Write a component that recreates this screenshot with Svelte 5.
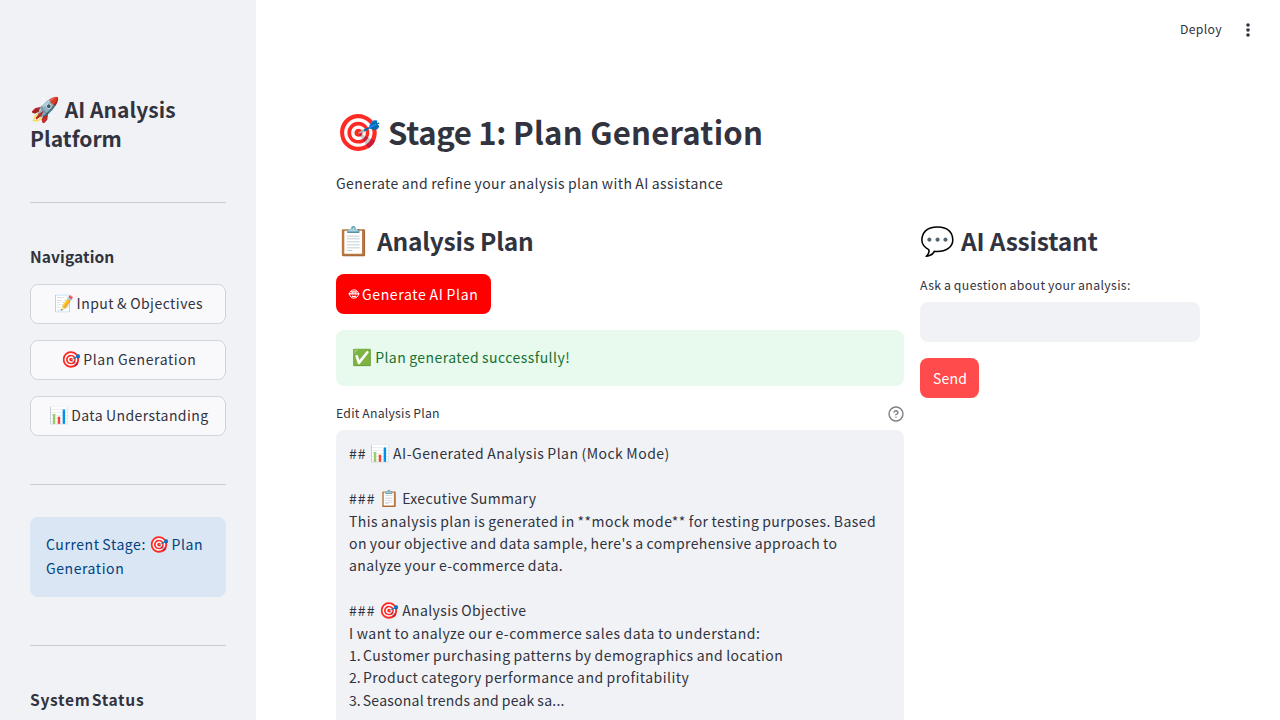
<script lang="ts">
  const nav = [
    { icon: '📝', label: 'Input & Objectives', ls: 0.46 },
    { icon: '🎯', label: 'Plan Generation', ls: 0.57 },
    { icon: '📊', label: 'Data Understanding', ls: 0.42 },
  ];

  const plan = [
    { pre: '## ', preLs: 1, icon: '📊', text: ' AI-Generated Analysis Plan (Mock Mode)', ls: 0.48 },
    { text: '', ls: 0 },
    { pre: '### ', preLs: 1.1, icon: '📋', text: ' Executive Summary', ls: 0.35 },
    { text: 'This analysis plan is generated in **mock mode** for testing purposes. Based', ls: 0.45 },
    { text: "on your objective and data sample, here's a comprehensive approach to", ls: 0.395 },
    { text: 'analyze your e-commerce data.', ls: 0.44 },
    { text: '', ls: 0 },
    { pre: '### ', preLs: 1.1, icon: '🎯', text: ' Analysis Objective', ls: 0.38 },
    { text: 'I want to analyze our e-commerce sales data to understand:', ls: 0.52 },
    { num: '1.', text: ' Customer purchasing patterns by demographics and location', ls: 0.47 },
    { num: '2.', text: ' Product category performance and profitability', ls: 0.47 },
    { num: '3.', text: ' Seasonal trends and peak sa...', ls: 0.25 },
  ];
</script>

<div class="app">
  <aside>
    <h2 class="brand"><span class="emoji">🚀</span> AI Analysis<br />Platform</h2>
    <hr />
    <h3>Navigation</h3>
    <nav>
      {#each nav as item}
        <button class="nav-btn"><span class="emoji">{item.icon}</span>&nbsp;<span style:letter-spacing="{item.ls}px">{item.label}</span></button>
      {/each}
    </nav>
    <hr class="after-nav" />
    <div class="info">Current Stage: <span class="emoji">🎯</span> Plan<br />Generation</div>
    <hr class="after-info" />
    <h3 class="status">System Status</h3>
  </aside>

  <div class="page">
    <header>
      <span class="deploy">Deploy</span>
      <svg class="dots" width="16" height="16" viewBox="0 0 16 16" fill="#31333f">
        <circle cx="8" cy="3" r="1.8" /><circle cx="8" cy="8" r="1.8" /><circle cx="8" cy="13" r="1.8" />
      </svg>
    </header>
    <main>
      <h1><span class="emoji">🎯</span> <span class="stage">Stage 1:</span> <span class="title">Plan Generation</span></h1>
      <p class="lead">Generate and refine your analysis plan with AI assistance</p>
      <div class="columns">
        <section class="left">
          <h2><span class="emoji">📋</span> Analysis Plan</h2>
          <button class="generate">
            <svg width="12" height="12" viewBox="0 0 12 12" fill="none" stroke="#fff">
              <ellipse cx="6" cy="6" rx="4.5" ry="4.1" stroke-width="1" />
              <path d="M3.2 3.9h5.6M.6 5.9h10.8M3.8 8q2.2 1.1 4.4 0" stroke-width="1.1" />
              <circle cx="4.4" cy="5" r=".5" stroke-width=".8" /><circle cx="7.6" cy="5" r=".5" stroke-width=".8" />
            </svg><span>Generate AI Plan</span>
          </button>
          <div class="success"><span class="emoji">✅</span>&nbsp;<span class="message">Plan generated successfully!</span></div>
          <div class="label">
            <span>Edit Analysis Plan</span>
            <svg width="16" height="16" viewBox="0 0 24 24" fill="none" stroke="#808189" stroke-width="2.2" stroke-linecap="round" stroke-linejoin="round">
              <circle cx="12" cy="12" r="10.4" />
              <path d="M9.1 9a3 3 0 0 1 5.8 1c0 2-3 3-3 3M12 17h.01" />
            </svg>
          </div>
          <div class="editor">
            {#each plan as line}
              <div class="line" style:letter-spacing="{line.ls}px">{#if line.icon}<span style:letter-spacing="{line.preLs}px">{line.pre}</span><span class="emoji">{line.icon}</span>{/if}{#if line.num}<span class="num">{line.num}</span>{/if}{line.text}</div>
            {/each}
          </div>
        </section>
        <section class="right">
          <h2><span class="emoji">💬</span> AI Assistant</h2>
          <label class="ask" for="question">Ask a question about your analysis:</label>
          <input id="question" />
          <button class="send">Send</button>
        </section>
      </div>
    </main>
  </div>
</div>

<style>
  :global(body) { margin: 0; overflow: hidden; background: #fff; }
  * { box-sizing: border-box; }
  .app {
    display: flex;
    width: 1280px;
    height: 720px;
    overflow: hidden;
    color: #31333f;
    font-family: 'Noto Sans CJK SC', 'Noto Sans', sans-serif;
    font-size: 14px;
  }
  button, input { font: inherit; color: inherit; border: 0; padding: 0; }
  h1, h2, h3, p { margin: 0; font-weight: 600; white-space: nowrap; }
  .emoji { font-size: 1.143em; line-height: 0; letter-spacing: 0; }
  aside { width: 256px; flex: none; height: 720px; padding: 95px 30px 0; background: #f0f2f6; overflow: hidden; }
  .brand { font-size: 21px; line-height: 28.8px; letter-spacing: 0.04px; }
  hr { margin: 48px 0 0; border: 0; height: 1px; background: #cbccd2; }
  .brand + hr { margin-top: 49px; }
  h3 { font-size: 15.6px; line-height: 24px; letter-spacing: 0.08px; }
  aside > h3 { margin-top: 41px; }
  .status { letter-spacing: 0.68px; word-spacing: -3px; }
  nav { display: flex; flex-direction: column; gap: 16px; margin-top: 16px; }
  .nav-btn {
    height: 40px;
    padding: 0 0 2px 1px;
    border: 1px solid #d0d2d8;
    border-radius: 8px;
    background: #f9f9fb;
    line-height: 24px;
    white-space: nowrap;
    word-spacing: -0.5px;
  }
  .info {
    margin-top: 32px;
    height: 80px;
    padding: 15px 16px;
    border-radius: 8px;
    background: #dae6f4;
    color: #004280;
    line-height: 24px;
    white-space: nowrap;
    letter-spacing: 0.57px;
    word-spacing: -0.9px;
  }
  .page { flex: 1; min-width: 0; }
  header { height: 60px; display: flex; align-items: center; justify-content: flex-end; padding-right: 24px; gap: 18px; }
  .deploy { font-size: 12.25px; line-height: 20px; letter-spacing: 0.33px; padding-bottom: 2px; }
  main { padding: 45px 80px 0; }
  h1 { font-size: 31.1px; line-height: 53px; }
  h1 .emoji { font-size: 36px; }
  .stage { letter-spacing: -0.35px; }
  .title { letter-spacing: 0.24px; }
  .lead { font-weight: 400; font-size: 14px; line-height: 24px; margin-top: 13px; letter-spacing: 0.44px; word-spacing: -0.6px; }
  .columns { display: flex; gap: 16px; margin-top: 28px; }
  .left { width: 568px; }
  .right { width: 280px; }
  section h2 { font-size: 24.5px; line-height: 36px; letter-spacing: -0.2px; }
  section h2 .emoji { margin-right: 0.6px; }
  .generate {
    display: flex;
    align-items: center;
    gap: 2px;
    width: 155px;
    height: 40px;
    margin-top: 15px;
    padding-left: 12px;
    border-radius: 8px;
    background: #f00;
    color: #fff;
    white-space: nowrap;
    letter-spacing: 0.64px;
    word-spacing: -0.6px;
  }
  .success {
    height: 56px;
    margin-top: 16px;
    padding: 15px 16px;
    border-radius: 8px;
    background: #e8f9ee;
    color: #177233;
    line-height: 24px;
    white-space: nowrap;
  }
  .message { letter-spacing: 0.44px; word-spacing: -0.6px; }
  .label { display: flex; justify-content: space-between; align-items: center; height: 24px; margin-top: 16px; font-size: 12.25px; letter-spacing: 0.23px; word-spacing: -0.3px; }
  .label span { padding-bottom: 2px; }
  .editor { margin-top: 4px; height: 400px; padding: 12.4px 13px; border-radius: 8px; background: #f0f2f6; }
  .line { height: 22.4px; line-height: 22.4px; white-space: pre; word-spacing: -0.6px; }
  .num { letter-spacing: 0; margin-right: -0.7px; }
  .ask { display: block; height: 24px; margin-top: 14px; font-size: 12.25px; line-height: 24px; white-space: nowrap; letter-spacing: 0.37px; word-spacing: -0.5px; }
  input { display: block; width: 280px; height: 40px; margin-top: 5px; border-radius: 8px; background: #f0f2f6; }
  .send { display: block; width: 59px; height: 40px; margin-top: 16px; border-radius: 8px; background: #ff4b4b; color: #fff; letter-spacing: 0.2px; padding-left: 1px; }
</style>
